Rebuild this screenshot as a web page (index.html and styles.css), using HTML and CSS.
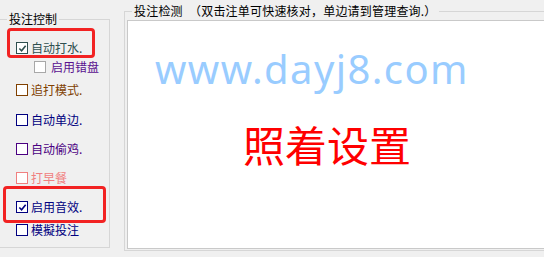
FILE: index.html
```html
<!DOCTYPE html>
<html lang="zh-CN">

<head>
    <meta charset="UTF-8">
    <meta name="viewport" content="width=device-width, initial-scale=1.0">
    <title>投注设置</title>
    <link rel="stylesheet" href="styles.css">
</head>

<body>

    <div class="window">

        <fieldset class="group group-control">
            <legend>投注控制</legend>

            <label class="opt opt-water">
                <span class="box"><svg viewBox="0 0 10 10"><path d="M1.5 5 L4 7.5 L8.5 2"></path></svg></span>
                自动打水.
            </label>
            <label class="opt opt-sub">
                <span class="box box-light"></span>
                启用错盘
            </label>
            <label class="opt opt-chase">
                <span class="box"></span>
                追打模式.
            </label>
            <label class="opt opt-single">
                <span class="box"></span>
                自动单边.
            </label>
            <label class="opt opt-steal">
                <span class="box"></span>
                自动偷鸡.
            </label>
            <label class="opt opt-early">
                <span class="box"></span>
                打早餐
            </label>
            <label class="opt opt-sound">
                <span class="box"><svg viewBox="0 0 10 10"><path d="M1.5 5 L4 7.5 L8.5 2"></path></svg></span>
                启用音效.
            </label>
            <label class="opt opt-sim">
                <span class="box"></span>
                模擬投注
            </label>
        </fieldset>

        <fieldset class="group group-check">
            <legend>投注检测　（双击注单可快速核对，单边请到管理查询.）</legend>
            <div class="board">
                <div class="site">www.dayj8.com</div>
                <div class="hint">照着设置</div>
            </div>
        </fieldset>

        <!-- red marks drawn over the options -->
        <div class="mark mark-water"></div>
        <div class="mark mark-sound"></div>

    </div>

</body>

</html>
```

FILE: styles.css
```css
body {
    margin: 0;
    background-color: #f0f0f0;
    font-family: "Noto Sans CJK SC", "Noto Sans", sans-serif;
    font-size: 12px;
    overflow: hidden;
}

.window {
    position: relative;
    display: flex;
    height: 257px;
    width: 544px;
    overflow: hidden;
}

/* Group boxes */
.group {
    margin: 0;
    border: 1px solid #d6d6d6;
    box-sizing: border-box;
    min-width: 0;
}

.group legend {
    padding: 0 2px;
    line-height: 14px;
    color: #000;
}

.group-control {
    flex: 0 0 111px;
    margin: 12px 0 0 -1px;
    height: 236px;
    padding: 0;
    display: flex;
    flex-direction: column;
}

.group-control legend {
    margin-left: 7px;
}

.group-check {
    flex: 0 0 440px;
    margin: 4px 0 0 14px;
    height: 247px;
    padding: 2px 2px 0;
}

.group-check legend {
    margin-left: 5px;
    letter-spacing: 0.2px;
}

/* Option rows */
.opt {
    display: flex;
    align-items: center;
    gap: 3px;
    height: 20px;
    padding-left: 16px;
    line-height: 20px;
    white-space: nowrap;
}

.box {
    width: 12px;
    height: 12px;
    box-sizing: border-box;
    border: 1px solid currentColor;
    background-color: #fff;
    display: flex;
    align-items: center;
    justify-content: center;
}

.box svg {
    width: 9px;
    height: 9px;
}

.box path {
    fill: none;
    stroke: currentColor;
    stroke-width: 1.8;
}

.box-light {
    border-color: #a8a8a8;
}

.opt-water {
    margin-top: 12px;
    color: #2f4f4f;
}

.opt-sub {
    margin-top: -1px;
    padding-left: 34px;
    gap: 5px;
    color: #5a118f;
}

.opt-chase {
    margin-top: 3px;
    color: #804000;
}

.opt-single {
    margin-top: 10px;
    color: #000080;
}

.opt-steal {
    margin-top: 9px;
    color: #4b0082;
}

.opt-early {
    margin-top: 9px;
    color: #f08080;
}

.opt-sound {
    margin-top: 9px;
    color: #000080;
}

.opt-sim {
    margin-top: 3px;
    color: #000080;
}

/* Detection board */
.board {
    height: 229px;
    box-sizing: border-box;
    background-color: #fff;
    border: 1px solid #c9c9c9;
    border-right: none;
    padding-left: 27px;
}

.site {
    margin-top: 28px;
    font-family: "Noto Sans", sans-serif;
    font-size: 40px;
    line-height: 40px;
    letter-spacing: 1.4px;
    color: #99ccff;
}

.hint {
    margin-top: 34px;
    padding-left: 88px;
    font-size: 42px;
    line-height: 42px;
    color: #ff0000;
}

/* Red highlight marks */
.mark {
    position: absolute;
    box-sizing: border-box;
    border: 3px solid #f22222;
    border-radius: 4px;
}

.mark-water {
    left: 7px;
    top: 28px;
    width: 88px;
    height: 30px;
}

.mark-sound {
    left: 3px;
    top: 186px;
    width: 103px;
    height: 37px;
}
```
